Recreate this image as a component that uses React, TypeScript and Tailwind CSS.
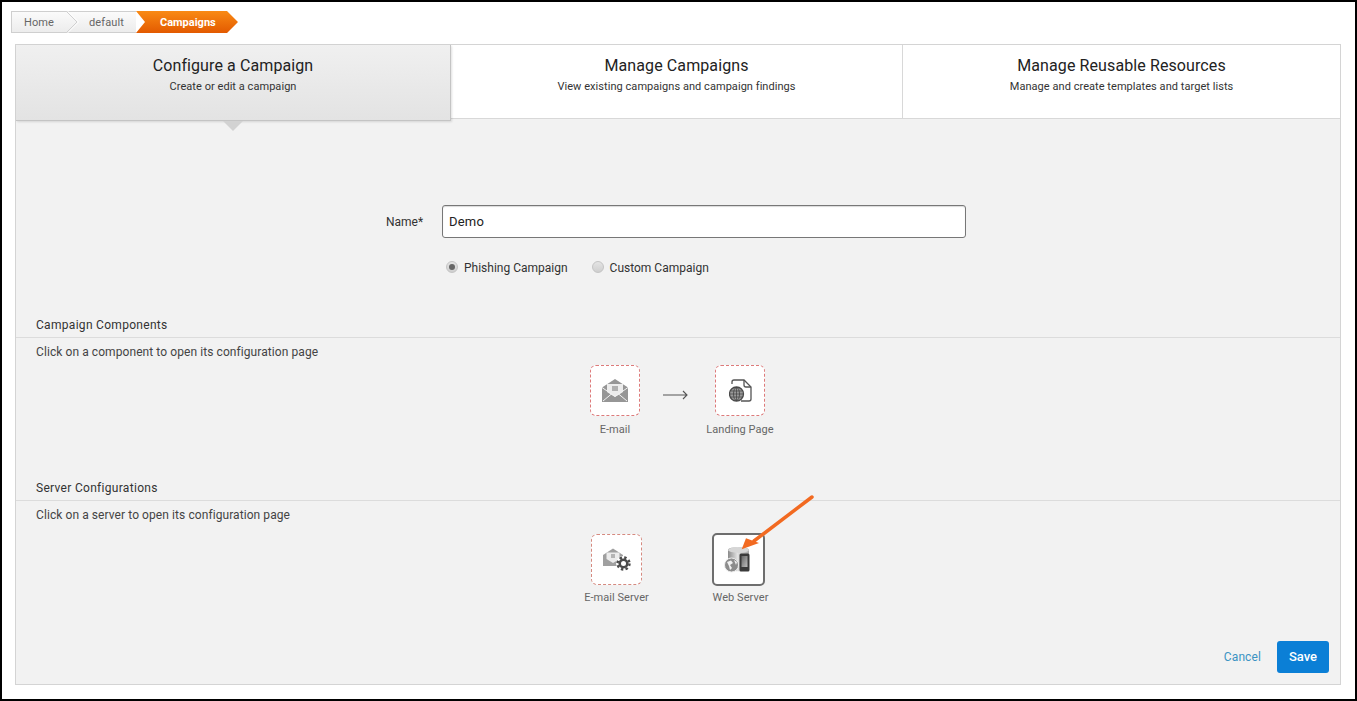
import type { ReactNode } from "react";

function Crumbs() {
  return (
    <div className="ml-[9px] mt-[9px] flex h-[22px] w-[228px] text-[11px] leading-[23px]">
      <div className="relative w-[125px] tracking-[0.1px] text-[#666]">
        <svg className="absolute inset-0" width="125" height="22" viewBox="0 0 125 22">
          <defs>
            <linearGradient id="crumb" x1="0" y1="0" x2="0" y2="1">
              <stop offset="0" stopColor="#fbfbfb" />
              <stop offset="1" stopColor="#ececec" />
            </linearGradient>
          </defs>
          <rect x="0.5" y="0.5" width="125" height="21" fill="url(#crumb)" stroke="#cfcfcf" />
          <path d="M55 0l11 11-11 11" fill="none" stroke="#d0d0d0" />
          <path d="M56.500 0l11 11-11 11" fill="none" stroke="#fff" />
        </svg>
        <span className="absolute left-[13px] top-0">Home</span>
        <span className="absolute left-[78px] top-0">default</span>
      </div>
      <div className="relative w-[100px] text-[11px] font-bold text-white">
        <svg className="absolute inset-0" width="103" height="22" viewBox="0 0 103 22">
          <defs>
            <linearGradient id="crumbOn" x1="0" y1="0" x2="0" y2="1">
              <stop offset="0" stopColor="#f98a14" />
              <stop offset="1" stopColor="#e35a00" />
            </linearGradient>
          </defs>
          <path d="M0 0h91l11 11-11 11H0l9-11z" fill="url(#crumbOn)" />
        </svg>
        <span className="absolute left-[24px] top-0">Campaigns</span>
      </div>
    </div>
  );
}

function Tab({ title, sub, width, last }: { title: string; sub: string; width: string; last?: boolean }) {
  return (
    <div className={`${width} ${last ? "" : "border-r border-[#d8d8d8]"} flex flex-col items-center pt-[10px] text-[#222]`}>
      <div className="text-[16px] leading-[22px] tracking-[0.1px]">{title}</div>
      <div className="mt-[2px] text-[11px] leading-[16px] tracking-[0.05px] text-[#333]">{sub}</div>
    </div>
  );
}

function Heading({ children }: { children: ReactNode }) {
  return (
    <div className="border-b border-[#dcdcdc] pb-[4px] pl-[20px] text-[12px] leading-[16px] tracking-[0.3px] text-[#333]">
      {children}
    </div>
  );
}

function Radio({ on, label }: { on?: boolean; label: string }) {
  return (
    <div className="flex items-center gap-[6px]">
      <span className="flex h-[12px] w-[12px] -translate-y-[1px] items-center justify-center rounded-full border border-[#c4c4c4] bg-gradient-to-b from-[#e4e4e4] to-[#cfcfcf]">
        {on && <span className="h-[6px] w-[6px] rounded-full bg-[#666]" />}
      </span>
      <span>{label}</span>
    </div>
  );
}

function MailIcon() {
  return (
    <svg width="26" height="23" viewBox="0 0 26 23">
      <path d="M0 8.500L13 0l13 8.500V23H0z" fill="#969696" />
      <path d="M5 5h16v8l-8 5-8-5z" fill="#ececec" />
      <rect x="10" y="7" width="6" height="5" fill="#b0b0b0" />
      <path d="M0 8.500l13 9 13-9M1 22l9-7.500M25 22l-9-7.500" fill="none" stroke="#f2f2f2" strokeWidth="1" />
    </svg>
  );
}

function PageIcon() {
  return (
    <svg width="23" height="23" viewBox="0 0 23 23">
      <path d="M3 5V3a2 2 0 0 1 2-2h10l7 7v12a2 2 0 0 1-2 2h-8" fill="#fff" stroke="#555" strokeWidth="1.300" />
      <path d="M15 1v5a2 2 0 0 0 2 2h5" fill="none" stroke="#555" strokeWidth="1.300" />
      <circle cx="7.500" cy="15" r="7" fill="#9a9a9a" stroke="#4a4a4a" strokeWidth="1.300" />
      <ellipse cx="7.500" cy="15" rx="3" ry="6.500" fill="none" stroke="#444" strokeWidth="0.800" />
      <path d="M7.500 8.500v13M1 15h13M1.800 12h11.400M1.800 18h11.400" stroke="#444" strokeWidth="0.700" />
    </svg>
  );
}

function MailGearIcon() {
  return (
    <svg width="28" height="23" viewBox="0 0 28 23">
      <path d="M0 7l10-6.500L20 7v11H0z" fill="#a0a0a0" />
      <path d="M3.500 4.500h13V11L10 15l-6.500-4z" fill="#ececec" />
      <rect x="8" y="6" width="4" height="4" fill="#b5b5b5" />
      <circle cx="20.500" cy="15.500" r="7.500" fill="#fff" />
      <circle cx="20.500" cy="15.500" r="6" fill="none" stroke="#4a4a4a" strokeWidth="2.400" strokeDasharray="2.400 2.312" />
      <circle cx="20.500" cy="15.500" r="3.800" fill="none" stroke="#4a4a4a" strokeWidth="2.600" />
    </svg>
  );
}

function ServerIcon() {
  return (
    <svg width="28" height="27" viewBox="0 0 28 27">
      <defs>
        <linearGradient id="drum" x1="0" y1="0" x2="1" y2="0">
          <stop offset="0" stopColor="#8a8a8a" />
          <stop offset="0.450" stopColor="#e2e2e2" />
          <stop offset="1" stopColor="#a8a8a8" />
        </linearGradient>
        <linearGradient id="screen" x1="0" y1="0" x2="1" y2="1">
          <stop offset="0" stopColor="#666" />
          <stop offset="1" stopColor="#bdbdbd" />
        </linearGradient>
      </defs>
      <path d="M4 4c0-4 21-4 21 0v19c0 3-21 3-21 0z" fill="url(#drum)" />
      <ellipse cx="14.500" cy="4" rx="10.500" ry="2.800" fill="#d6d6d6" />
      <rect x="15.500" y="7.500" width="10" height="18" rx="1.500" fill="#3a3a3a" />
      <rect x="17.500" y="10" width="6" height="11" fill="url(#screen)" />
      <circle cx="7.500" cy="19" r="7" fill="#8c8c8c" stroke="#eee" />
      <path d="M3 16l4-1.500 2 2.500-3 2 2 3-2 2-1-4z" fill="#f1f1f1" />
      <path d="M10 14l3 2-1 3z" fill="#f1f1f1" />
    </svg>
  );
}

function Item({
  label,
  width,
  box,
  labelClass,
  children,
}: {
  label: string;
  width: string;
  box: string;
  labelClass: string;
  children: ReactNode;
}) {
  return (
    <div className={`${width} flex flex-col items-center`}>
      <div className={`${box} flex items-center justify-center bg-white`}>{children}</div>
      <div className={`${labelClass} text-[11px] leading-[14px] tracking-[0.05px] text-[#666]`}>{label}</div>
    </div>
  );
}

export default function App() {
  return (
    <div className="relative h-[701px] w-[1357px] overflow-hidden border-2 border-black bg-white font-['Roboto',sans-serif]">
      <Crumbs />
      <div className="ml-[13px] mt-[11px] h-[641px] w-[1326px] border border-[#d4d4d4] bg-[#f2f2f2]">
        <div className="relative flex h-[74px] border-b border-[#d8d8d8] bg-white">
          <div className="relative z-10 flex h-[76px] w-[435px] shrink-0 flex-col items-center border-b border-r border-[#c4c4c4] bg-gradient-to-b from-[#f0f0f0] to-[#e3e3e3] pt-[10px] text-[#222] shadow-[1px_1px_2px_rgba(0,0,0,0.12)]">
            <div className="text-[16px] leading-[22px] tracking-[0.1px]">Configure a Campaign</div>
            <div className="mt-[2px] text-[11px] leading-[16px] tracking-[0.05px] text-[#333]">Create or edit a campaign</div>
            <div className="absolute -bottom-[11px] left-[207px] h-0 w-0 border-x-[10px] border-t-[10px] border-x-transparent border-t-[#d2d2d2]" />
          </div>
          <Tab title="Manage Campaigns" sub="View existing campaigns and campaign findings" width="w-[452px]" />
          <Tab title="Manage Reusable Resources" sub="Manage and create templates and target lists" width="flex-1" last />
        </div>

        <div className="ml-[370px] mt-[86px] flex items-center text-[12px] text-[#333]">
          <div className="w-[37px]">Name*</div>
          <div className="ml-[19px] flex h-[33px] w-[524px] items-center rounded-[3px] border border-[#777] bg-white pl-[6px] text-[13px] tracking-[0.2px] text-[#222] shadow-[inset_0_1px_1px_rgba(0,0,0,0.15)]">
            Demo
          </div>
        </div>
        <div className="ml-[430px] mt-[22px] flex gap-[24px] text-[12px] leading-[16px] text-[#333]">
          <Radio on label="Phishing Campaign" />
          <Radio label="Custom Campaign" />
        </div>

        <div className="mt-[41px]">
          <Heading>Campaign Components</Heading>
          <div className="mt-[6px] pl-[20px] text-[12px] leading-[16px] tracking-[0.08px] text-[#444]">Click on a component to open its configuration page</div>
          <div className="ml-[551px] mt-[5px] flex items-start">
            <Item label="E-mail" labelClass="mt-[7px]" width="w-[96px]" box="h-[51px] w-[50px] rounded-[6px] border border-dashed border-[#dd7a7a]">
              <MailIcon />
            </Item>
            <svg className="mt-[24px]" width="25" height="12" viewBox="0 0 25 12">
              <path d="M0 6h24M20 2l4 4-4 4" fill="none" stroke="#555" strokeWidth="1.100" />
            </svg>
            <Item label="Landing Page" labelClass="mt-[7px]" width="w-[104px]" box="h-[51px] w-[50px] rounded-[6px] border border-dashed border-[#dd7a7a]">
              <PageIcon />
            </Item>
          </div>
        </div>

        <div className="mt-[43px]">
          <Heading>Server Configurations</Heading>
          <div className="mt-[6px] pl-[20px] text-[12px] leading-[16px] tracking-[0.08px] text-[#444]">Click on a server to open its configuration page</div>
          <div className="ml-[553px] mt-[10px] flex items-end">
            <Item label="E-mail Server" labelClass="mt-[5px]" width="w-[95px]" box="mb-[1px] h-[51px] w-[51px] rounded-[6px] border border-dashed border-[#d58a80]">
              <MailGearIcon />
            </Item>
            <Item label="Web Server" labelClass="ml-[5px] mt-[5px]" width="w-[148px]" box="h-[53px] w-[53px] rounded-[5px] border-2 border-[#6e6e6e]">
              <ServerIcon />
            </Item>
          </div>
        </div>

        <div className="mt-[36px] flex items-center justify-end pr-[11px]">
          <span className="text-[12px] tracking-[0.1px] text-[#3b93c3]">Cancel</span>
          <div className="ml-[16px] flex h-[32px] w-[52px] items-center justify-center rounded-[3px] bg-[#0b7fd6] text-[13px] font-medium text-white">Save</div>
        </div>
      </div>

      {/* callout drawn on top of the screenshot */}
      <svg className="absolute left-[726px] top-[490px]" width="90" height="64" viewBox="0 0 90 64">
        <path d="M84 5L26 49" stroke="#f26a21" strokeWidth="3.500" strokeLinecap="round" />
        <path d="M13.700 57.300L18 46.300 31 51z" fill="#f26a21" />
      </svg>
    </div>
  );
}
